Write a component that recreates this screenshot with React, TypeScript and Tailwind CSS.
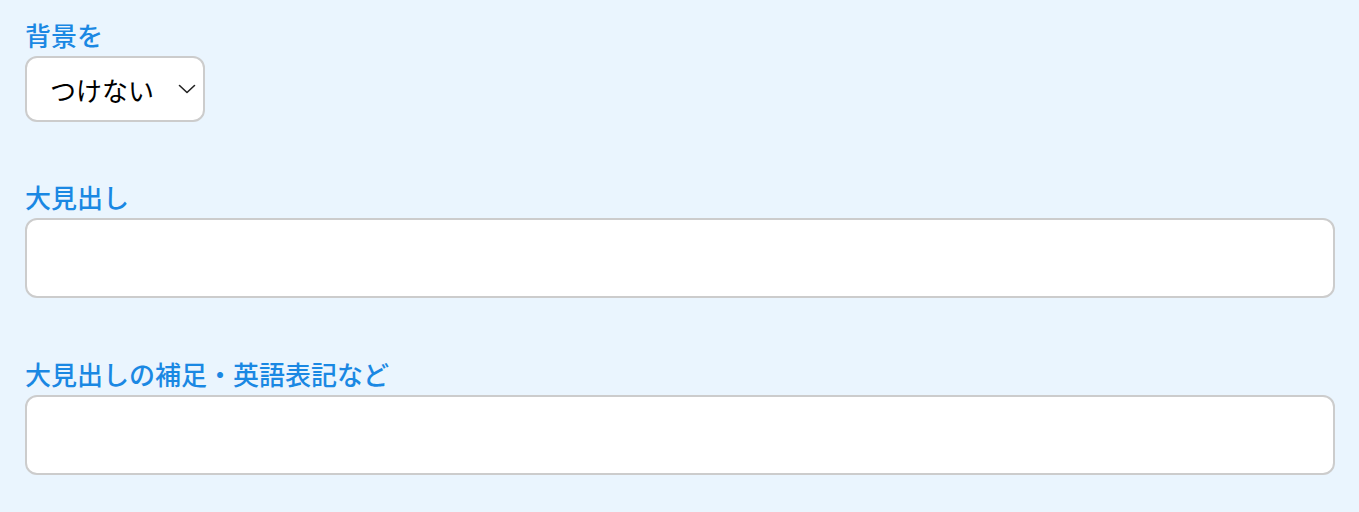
import React from 'react';

const font = { fontFamily: '"Noto Sans CJK JP", "Noto Sans", sans-serif' };

function Label({ children }: { children: React.ReactNode }) {
  return <div className="text-[26px] leading-[34px] font-medium text-[#1a88e3]">{children}</div>;
}

export default function App() {
  return (
    <div className="min-h-[512px] w-full bg-[#eaf5fe] px-[25px] pt-[18px] pr-[24px]" style={font}>
      <div className="mb-[58px]">
        <Label>背景を</Label>
        <div className="relative mt-1 w-[180px]">
          <select
            defaultValue="none"
            className="h-[66px] w-full appearance-none rounded-[12px] border-2 border-[#cccccc] bg-white pl-[23px] text-[26px] text-black outline-none"
          >
            <option value="none">つけない</option>
            <option value="on">つける</option>
          </select>
          <span className="pointer-events-none absolute right-[9px] top-[28px] z-10 block">
            <svg width="18" height="10" viewBox="0 0 18 10" fill="none">
              <path d="M1.5 1.5 L9 8.5 L16.5 1.5" stroke="#222" strokeWidth="1.6" strokeLinecap="round" strokeLinejoin="round" />
            </svg>
          </span>
        </div>
      </div>

      <div className="mb-[59px]">
        <Label>大見出し</Label>
        <input
          type="text"
          className="mt-1 block h-[80px] w-full rounded-[12px] border-2 border-[#cccccc] bg-white px-4 text-[24px] outline-none"
        />
      </div>

      <div>
        <Label>大見出しの補足・英語表記など</Label>
        <input
          type="text"
          className="mt-1 block h-[80px] w-full rounded-[12px] border-2 border-[#cccccc] bg-white px-4 text-[24px] outline-none"
        />
      </div>
    </div>
  );
}
